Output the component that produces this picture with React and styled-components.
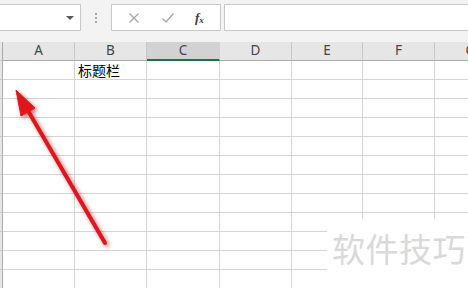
import React from "react";
import styled, { createGlobalStyle } from "styled-components";

const Global = createGlobalStyle`
  html, body { margin: 0; padding: 0; background: #ffffff; }
  body { font-family: "Noto Sans", "Noto Sans CJK SC", sans-serif; }
`;

const Page = styled.div`
  position: relative;
  width: 468px;
  height: 288px;
  overflow: hidden;
  display: flex;
  flex-direction: column;
  background: #ffffff;
`;

const Toolbar = styled.div`
  height: 42px;
  flex: none;
  box-sizing: border-box;
  padding-top: 4px;
  background: #f3f3f3;
  display: flex;
  align-items: flex-start;
`;

const Field = styled.div`
  height: 27px;
  box-sizing: border-box;
  background: #ffffff;
  border: 1px solid #c8c8c8;
  display: flex;
  align-items: center;
`;

const NameBox = styled(Field)`
  width: 81px;
  border-left: none;
  justify-content: flex-end;
  padding-right: 6px;
`;

const Caret = styled.span`
  width: 0;
  height: 0;
  border-left: 4px solid transparent;
  border-right: 4px solid transparent;
  border-top: 4px solid #5a5a5a;
`;

const Grip = styled.div`
  width: 30px;
  height: 27px;
  display: flex;
  flex-direction: column;
  align-items: center;
  justify-content: center;
  gap: 2px;
`;

const Dot = styled.span`
  width: 2px;
  height: 2px;
  background: #a8a8a8;
`;

const FxBox = styled(Field)`
  width: 110px;
  justify-content: space-around;
  padding: 0 6px;
`;

const FxLabel = styled.span`
  font-family: "Liberation Serif", serif;
  font-style: italic;
  font-weight: bold;
  font-size: 13px;
  color: #3c3c3c;
  line-height: 1;
  sub { font-size: 9px; vertical-align: -1px; }
`;

const Formula = styled(Field)`
  flex: 1;
  margin-left: 3px;
  border-right: none;
`;

const Grid = styled.div`
  display: grid;
  grid-template-columns: 3px 72px 72px 73px 72px 71px 72px 72px;
  grid-auto-rows: 19px;
`;

const Head = styled.div`
  box-sizing: border-box;
  background: ${(p) => (p.$sel ? "#d2d2d2" : "#e6e6e6")};
  border-right: 1px solid ${(p) => (p.$sel ? "#d2d2d2" : "#c6c6c6")};
  border-bottom: ${(p) => (p.$sel ? "2px solid #217346" : "1px solid #ababab")};
  display: flex;
  align-items: center;
  justify-content: center;
  font-family: "Noto Sans", sans-serif;
  font-size: 13.5px;
  color: #444444;
  line-height: 1;
  padding-bottom: ${(p) => (p.$sel ? "0" : "1px")};
`;

const RowHead = styled.div`
  box-sizing: border-box;
  background: #e6e6e6;
  border-right: 1px solid #ababab;
  border-bottom: 1px solid #c6c6c6;
`;

const Cell = styled.div`
  box-sizing: border-box;
  border-right: 1px solid #d4d4d4;
  border-bottom: 1px solid #d4d4d4;
  font-family: "Noto Sans CJK SC", sans-serif;
  font-size: 14px;
  line-height: 18px;
  padding-left: 3px;
  color: #000000;
  white-space: nowrap;
  overflow: hidden;
`;

const Watermark = styled.div`
  position: absolute;
  left: 327px;
  top: 219px;
  right: 0;
  bottom: 0;
  background: #ffffff;
  padding: 9px 0 0 5px;
  font-family: "Noto Sans CJK SC", sans-serif;
  font-size: 33px;
  line-height: 40px;
  letter-spacing: 0.5px;
  color: #d9d9d9;
`;

const ArrowLayer = styled.svg`
  position: absolute;
  left: 0;
  top: 0;
  pointer-events: none;
`;

const cols = ["A", "B", "C", "D", "E", "F", "G"];

export default function App() {
  const rows = Array.from({ length: 12 }, (_, i) => i);
  return (
    <>
      <Global />
      <Page>
        <Toolbar>
          <NameBox>
            <Caret />
          </NameBox>
          <Grip>
            <Dot />
            <Dot />
            <Dot />
          </Grip>
          <FxBox>
            <svg width="12" height="12" viewBox="0 0 12 12">
              <path d="M1.5 1.5 L10.5 10.5 M10.5 1.5 L1.5 10.5" stroke="#a6a6a6" strokeWidth="1.3" fill="none" />
            </svg>
            <svg width="14" height="12" viewBox="0 0 14 12">
              <path d="M1.5 6.5 L5 10 L12.5 1.5" stroke="#a6a6a6" strokeWidth="1.4" fill="none" />
            </svg>
            <FxLabel>
              f<sub>x</sub>
            </FxLabel>
          </FxBox>
          <Formula />
        </Toolbar>
        <Grid>
          <RowHead />
          {cols.map((c) => (
            <Head key={c} $sel={c === "C"}>
              {c}
            </Head>
          ))}
          {rows.map((r) => (
            <React.Fragment key={r}>
              <RowHead />
              {cols.map((c) => (
                <Cell key={c}>{r === 0 && c === "B" ? "标题栏" : ""}</Cell>
              ))}
            </React.Fragment>
          ))}
        </Grid>
        <Watermark>软件技巧</Watermark>
        <ArrowLayer width="468" height="288" viewBox="0 0 468 288">
          <defs>
            <filter id="sh" x="-50%" y="-50%" width="200%" height="200%">
              <feGaussianBlur in="SourceAlpha" stdDeviation="2" />
              <feOffset dx="2" dy="2" result="b" />
              <feFlood floodColor="#7a0000" floodOpacity="0.55" />
              <feComposite in2="b" operator="in" />
              <feMerge>
                <feMergeNode />
                <feMergeNode in="SourceGraphic" />
              </feMerge>
            </filter>
          </defs>
          <g filter="url(#sh)" fill="#e0151b" stroke="#e0151b">
            <line x1="105" y1="243" x2="27" y2="109" strokeWidth="4" strokeLinecap="round" />
            <polygon points="16,90 35,108 21,116" strokeWidth="1" strokeLinejoin="round" />
          </g>
        </ArrowLayer>
      </Page>
    </>
  );
}
